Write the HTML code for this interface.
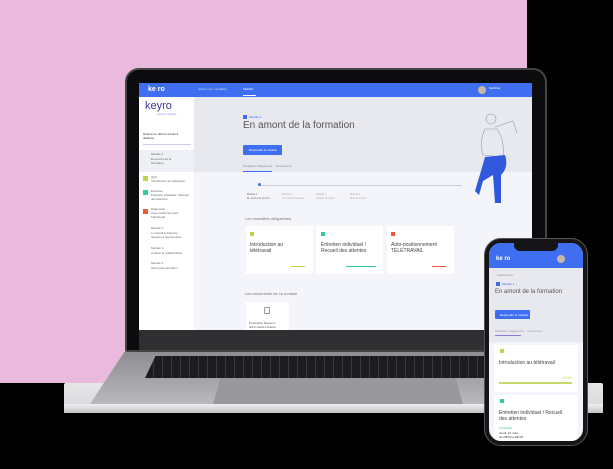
<!DOCTYPE html><html><head><meta charset="utf-8"><style>
*{margin:0;padding:0;box-sizing:border-box}
body{width:613px;height:469px;background:#000;position:relative;overflow:hidden;font-family:"Liberation Sans",sans-serif}
.a{position:absolute}
.t{position:absolute;white-space:nowrap;color:#555}
</style></head><body>
<div class="a" style="left:0;top:0;width:527px;height:383px;background:#e9b9de"></div>
<!-- laptop base -->
<div class="a" style="left:64px;top:383px;width:539px;height:30px;background:linear-gradient(#e6e6e8,#d8d8da);border-radius:2px"></div>
<div class="a" style="left:90px;top:352px;width:490px;height:52px;background:linear-gradient(#8e8e91,#b9b9bc);clip-path:polygon(7% 0,93% 0,100% 100%,0 100%)"></div>
<div class="a" style="left:64px;top:404px;width:539px;height:9px;background:linear-gradient(#eeeef0,#c4c4c7)"></div>
<div class="a" style="left:145px;top:356px;width:350px;height:22px;background:#1c1c1e;clip-path:polygon(3% 0,100% 0,100% 100%,0 100%)"></div>
<div class="a" style="left:145px;top:356px;width:350px;height:22px;background:repeating-linear-gradient(90deg,transparent 0 8px,#555 8px 9px);opacity:.5;clip-path:polygon(3% 0,100% 0,100% 100%,0 100%)"></div>
<div class="a" style="left:213px;top:378px;width:250px;height:26px;background:#98989b;clip-path:polygon(3% 0,97% 0,100% 100%,0 100%)"></div>
<!-- lid -->
<div class="a" style="left:125px;top:68px;width:422px;height:284px;background:#0c0c0e;border-radius:14px 14px 2px 2px;border:2px solid #444"></div>
<div class="a" style="left:139px;top:330px;width:393px;height:20px;background:#2f2f32"></div>
<!-- screen -->
<div class="a" style="left:139px;top:83px;width:393px;height:247px;background:#f4f5fa;overflow:hidden">
 <div class="a" style="left:0;top:0;width:393px;height:14px;background:#3f6ff0"></div>
 <div class="t" style="left:9px;top:3px;font-size:7px;color:#fff;font-weight:bold">ke ro</div>
 <div class="t" style="left:58px;top:4px;font-size:3px;color:#cdd">‹  Ecrire mes modalités</div>
 <div class="t" style="left:104px;top:4px;font-size:3px;color:#fff">Mobilité</div>
 <div class="a" style="left:104px;top:12px;width:13px;height:1px;background:#fff"></div>
 <div class="a" style="left:339px;top:3px;width:8px;height:8px;border-radius:50%;background:#c7b7a8"></div>
 <div class="t" style="left:350px;top:3px;font-size:3px;color:#fff">Mathilde</div>
 <div class="a" style="left:0;top:14px;width:55px;height:233px;background:#fff"></div>
 <div class="t" style="left:6px;top:17px;font-size:11px;color:#3a3a9a">keyro</div>
 <div class="t" style="left:18px;top:30px;font-size:2.5px;color:#88f">learning solutions</div>
 <div class="t" style="left:4px;top:49px;font-size:3px;color:#333;line-height:4px">Relevez le défi du travail à<br>distance</div>
 <div class="a" style="left:4px;top:61px;width:48px;height:1px;background:#c8ccf5"></div>
 <div class="a" style="left:0;top:67px;width:55px;height:22px;background:#eef0f6"></div>
 <div class="t" style="left:12px;top:69px;font-size:3px;color:#666;line-height:4.5px">Module 1<br>En amont de la<br>formation</div>
 <div class="a" style="left:4px;top:93px;width:5px;height:5px;background:#b9d64a"></div>
 <div class="t" style="left:12px;top:92px;font-size:3px;color:#666;line-height:4px">Quiz<br>Introduction au télétravail</div>
 <div class="a" style="left:4px;top:107px;width:5px;height:5px;background:#2ccf9c"></div>
 <div class="t" style="left:12px;top:106px;font-size:3px;color:#666;line-height:4px">Entretien<br>Entretien individuel / Recueil<br>des attentes</div>
 <div class="a" style="left:4px;top:126px;width:5px;height:5px;background:#ef5a3f"></div>
 <div class="t" style="left:12px;top:124px;font-size:3px;color:#666;line-height:4px">Diagnostic<br>Auto-positionnement<br>Télétravail</div>
 <div class="t" style="left:12px;top:143px;font-size:3px;color:#666;line-height:4.5px">Module 2<br>Le travail à distance :<br>risques et opportunités</div>
 <div class="t" style="left:12px;top:163px;font-size:3px;color:#666;line-height:4.5px">Module 3<br>Cultiver la collaboration</div>
 <div class="t" style="left:12px;top:178px;font-size:3px;color:#666;line-height:4.5px">Module 4<br>Suivi post-formation</div>
 <div class="a" style="left:55px;top:14px;width:338px;height:75px;background:#e8e9ef"></div>
 <div class="a" style="left:104px;top:32px;width:4px;height:4px;background:#3f6ff0"></div>
 <div class="t" style="left:110px;top:32px;font-size:3px;color:#3f6ff0">Module 1</div>
 <div class="t" style="left:104px;top:37px;font-size:10px;color:#555">En amont de la formation</div>
 <div class="a" style="left:104px;top:62px;width:39px;height:10px;background:#3f6ff0;border-radius:1px"></div>
 <div class="t" style="left:110px;top:65px;font-size:3px;color:#fff">Reprendre le module</div>
 <div class="t" style="left:104px;top:81px;font-size:3px;color:#889">Modalités obligatoires &nbsp;&nbsp;&nbsp; Documents</div>
 <div class="a" style="left:104px;top:88px;width:29px;height:1px;background:#3f6ff0"></div>
 <div class="a" style="left:120px;top:102px;width:203px;height:1px;background:#ccd"></div>
 <div class="a" style="left:119px;top:100px;width:3px;height:3px;border-radius:50%;background:#3f6ff0"></div>
 <div class="t" style="left:108px;top:110px;font-size:2.5px;color:#666;line-height:3.5px">Module 1<br>En amont de la form.</div>
 <div class="t" style="left:143px;top:110px;font-size:2.5px;color:#aaa;line-height:3.5px">Module 2<br>Le travail à distance</div>
 <div class="t" style="left:177px;top:110px;font-size:2.5px;color:#aaa;line-height:3.5px">Module 3<br>Cultiver la collab.</div>
 <div class="t" style="left:211px;top:110px;font-size:2.5px;color:#aaa;line-height:3.5px">Module 4<br>Suivi post-form.</div>
 <div class="t" style="left:106px;top:133px;font-size:4px;color:#777">Les modalités obligatoires</div>
 <div class="a" style="left:107px;top:143px;width:67px;height:48px;background:#fff"></div>
 <div class="a" style="left:177px;top:143px;width:67px;height:48px;background:#fff"></div>
 <div class="a" style="left:248px;top:143px;width:67px;height:48px;background:#fff"></div>
 <div class="a" style="left:111px;top:149px;width:4px;height:4px;background:#b9d64a"></div>
 <div class="a" style="left:182px;top:149px;width:4px;height:4px;background:#2ccf9c"></div>
 <div class="a" style="left:252px;top:149px;width:4px;height:4px;background:#ef5a3f"></div>
 <div class="t" style="left:111px;top:159px;font-size:5px;color:#444;line-height:6px">Introduction au<br>télétravail</div>
 <div class="t" style="left:182px;top:159px;font-size:5px;color:#444;line-height:6px">Entretien individuel /<br>Recueil des attentes</div>
 <div class="t" style="left:252px;top:159px;font-size:5px;color:#444;line-height:6px">Auto-positionnement<br>TÉLÉTRAVAIL</div>
 <div class="a" style="left:152px;top:183px;width:14px;height:1px;background:#b9d64a"></div>
 <div class="a" style="left:207px;top:183px;width:30px;height:1px;background:#2ccf9c"></div>
 <div class="a" style="left:293px;top:183px;width:14px;height:1px;background:#ef5a3f"></div>
 <div class="t" style="left:106px;top:208px;font-size:4px;color:#777">Les documents de ce module</div>
 <div class="a" style="left:107px;top:219px;width:43px;height:30px;background:#fff"></div>
 <div class="a" style="left:125px;top:224px;width:6px;height:7px;border:1px solid #99a;border-radius:1px"></div>
 <div class="t" style="left:110px;top:239px;font-size:2.5px;color:#555;line-height:3.5px">Présentation Relevez le<br>défi du travail à distance</div>
 <svg class="a" style="left:336px;top:28px" width="56" height="95" viewBox="0 0 56 95">
  <circle cx="16" cy="8" r="5" fill="none" stroke="#99a" stroke-width=".6"/>
  <path d="M10 18 Q4 30 8 44 L28 46 Q30 30 22 18 Z" fill="none" stroke="#99a" stroke-width=".6"/>
  <path d="M20 16 L38 10 L42 22" fill="none" stroke="#99a" stroke-width=".6"/>
  <path d="M10 46 L30 44 Q34 56 26 64 L26 92 L20 92 L18 64 L8 70 L4 84 L0 80 L6 60 Z" fill="#3358e0"/>
 </svg>
</div>
<!-- phone -->
<div class="a" style="left:484px;top:238px;width:104px;height:208px;background:#151517;border-radius:17px;border:1px solid #555"></div>
<div class="a" style="left:489px;top:243px;width:94px;height:198px;background:#f4f5fa;border-radius:12px;overflow:hidden">
 <div class="a" style="left:0;top:0;width:94px;height:25px;background:#3f6ff0"></div>
 <div class="a" style="left:25px;top:0;width:44px;height:8px;background:#151517;border-radius:0 0 6px 6px"></div>
 <div class="t" style="left:7px;top:13px;font-size:6px;color:#fff;font-weight:bold">ke ro</div>
 <div class="a" style="left:68px;top:12px;width:8px;height:8px;border-radius:50%;background:#c7b7a8"></div>
 <div class="a" style="left:0;top:25px;width:94px;height:74px;background:#e8e9ef"></div>
 <div class="t" style="left:7px;top:30px;font-size:3px;color:#999">‹ Dashboard</div>
 <div class="a" style="left:7px;top:39px;width:4px;height:4px;background:#3f6ff0"></div>
 <div class="t" style="left:13px;top:39px;font-size:3px;color:#3f6ff0">Module 1 ⌄</div>
 <div class="t" style="left:6px;top:46px;font-size:6px;color:#555">En amont de la formation</div>
 <div class="a" style="left:6px;top:67px;width:35px;height:9px;background:#3f6ff0;border-radius:1px"></div>
 <div class="t" style="left:11px;top:70px;font-size:3px;color:#fff">Reprendre le module</div>
 <div class="t" style="left:6px;top:86px;font-size:3px;color:#99a">Modalités obligatoires &nbsp;&nbsp; Documents</div>
 <div class="a" style="left:6px;top:92px;width:26px;height:1px;background:#8a7ae0"></div>
 <div class="a" style="left:5px;top:102px;width:84px;height:47px;background:#fff"></div>
 <div class="a" style="left:11px;top:106px;width:4px;height:4px;background:#b9d64a"></div>
 <div class="t" style="left:10px;top:117px;font-size:5px;color:#444">Introduction au télétravail</div>
 <div class="t" style="left:73px;top:132px;font-size:4px;color:#c9d96a">100%</div>
 <div class="a" style="left:10px;top:139px;width:73px;height:1.5px;background:#c9d96a"></div>
 <div class="a" style="left:5px;top:152px;width:84px;height:50px;background:#fff"></div>
 <div class="a" style="left:11px;top:156px;width:4px;height:4px;background:#2ccf9c"></div>
 <div class="t" style="left:10px;top:167px;font-size:5px;color:#444;line-height:6px">Entretien individuel / Recueil<br>des attentes</div>
 <div class="t" style="left:10px;top:183px;font-size:3px;color:#2ccf9c;line-height:4px">Présentiel</div>
 <div class="t" style="left:10px;top:188px;font-size:3px;color:#444;line-height:4px">Jeudi, 16 mars<br>de 09h00 à 09h30</div>
</div>
</body></html>
